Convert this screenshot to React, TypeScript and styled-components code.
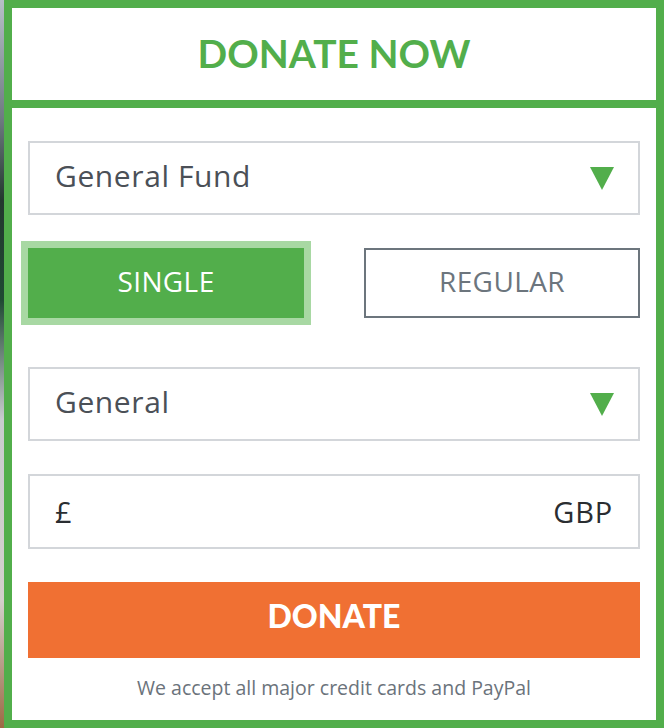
import { FC, useState } from "react";
import styled, { createGlobalStyle } from "styled-components";

const GlobalStyle = createGlobalStyle`
  html, body {
    margin: 0;
    padding: 0;
  }
  body {
    width: 664px;
    height: 728px;
    overflow: hidden;
    background: linear-gradient(
      180deg,
      #b7c0c8 0px,
      #6d7a80 120px,
      #23382e 200px,
      #1f4a33 300px,
      #c9cccf 420px,
      #d3d0cc 600px,
      #9b6a44 728px
    );
    font-family: "Open Sans", "Liberation Sans", sans-serif;
  }
`;

const Arrow: FC = () => (
  <svg width="24" height="24" viewBox="0 0 24 24">
    <polygon points="0,1 24,1 12,24" fill="#52ae4b" />
  </svg>
);

const App: FC = () => {
  const [type, setType] = useState<"single" | "regular">("single");

  return (
    <>
      <GlobalStyle />
      <Frame>
        <Header>
          <Title>DONATE NOW</Title>
        </Header>
        <Body>
          <Select>
            <SelectText>General Fund</SelectText>
            <Arrow />
          </Select>

          <ToggleRow>
            <ToggleButton
              active={type === "single"}
              onClick={() => setType("single")}
            >
              SINGLE
            </ToggleButton>
            <ToggleButton
              active={type === "regular"}
              onClick={() => setType("regular")}
            >
              REGULAR
            </ToggleButton>
          </ToggleRow>

          <Select spaced>
            <SelectText>General</SelectText>
            <Arrow />
          </Select>

          <AmountBox>
            <Currency>£</Currency>
            <Currency>GBP</Currency>
          </AmountBox>

          <DonateButton>DONATE</DonateButton>

          <Note>We accept all major credit cards and PayPal</Note>
        </Body>
      </Frame>
    </>
  );
};

export default App;

const Frame = styled.div`
  box-sizing: border-box;
  margin-left: 4px;
  width: 660px;
  height: 728px;
  border: 8px solid #52ae4b;
  background: #fff;
  display: flex;
  flex-direction: column;
`;

const Header = styled.div`
  height: 92px;
  border-bottom: 8px solid #52ae4b;
  display: flex;
  align-items: center;
  justify-content: center;
`;

const Title = styled.h1`
  margin: 0 0 2px;
  font-family: Lato, "Liberation Sans", sans-serif;
  font-weight: 700;
  font-size: 39px;
  color: #52ae4b;
`;

const Body = styled.div`
  padding: 33px 16px 0;
  display: flex;
  flex-direction: column;
`;

const Select = styled.div<{ spaced?: boolean }>`
  box-sizing: border-box;
  height: 74px;
  margin-top: ${({ spaced }) => (spaced ? "49px" : "0")};
  border: 2px solid #d3d6da;
  padding: 0 24px 0 25px;
  display: flex;
  align-items: center;
  justify-content: space-between;
`;

const SelectText = styled.span`
  margin-bottom: 6px;
  font-size: 30px;
  letter-spacing: 0.6px;
  color: #4b5057;
`;

const ToggleRow = styled.div`
  margin-top: 33px;
  display: grid;
  grid-template-columns: 276px 276px;
  justify-content: space-between;
`;

const ToggleButton = styled.button<{ active?: boolean }>`
  box-sizing: border-box;
  height: 70px;
  margin: 0;
  padding: 0 0 4px;
  font-family: "Open Sans", "Liberation Sans", sans-serif;
  font-size: 28px;
  letter-spacing: 0.4px;
  cursor: pointer;
  color: ${({ active }) => (active ? "#fff" : "#6c757d")};
  background: ${({ active }) => (active ? "#52ae4b" : "#fff")};
  border: 2px solid ${({ active }) => (active ? "#52ae4b" : "#6c757d")};
  box-shadow: ${({ active }) => (active ? "0 0 0 7px #a8d8a3" : "none")};
`;

const AmountBox = styled.div`
  box-sizing: border-box;
  height: 75px;
  margin-top: 33px;
  border: 2px solid #d3d6da;
  padding: 0 25px 0 25px;
  display: flex;
  align-items: center;
  justify-content: space-between;
`;

const Currency = styled.span`
  font-size: 29px;
  letter-spacing: 0.8px;
  color: #2a2d31;
`;

const DonateButton = styled.button`
  height: 76px;
  margin-top: 33px;
  padding: 0 0 10px;
  border: none;
  background: #f07033;
  color: #fff;
  font-family: Lato, "Liberation Sans", sans-serif;
  font-weight: 900;
  font-size: 32px;
  cursor: pointer;
`;

const Note = styled.p`
  margin: 16px 0 0;
  text-align: center;
  font-size: 19.5px;
  color: #6b737b;
`;
